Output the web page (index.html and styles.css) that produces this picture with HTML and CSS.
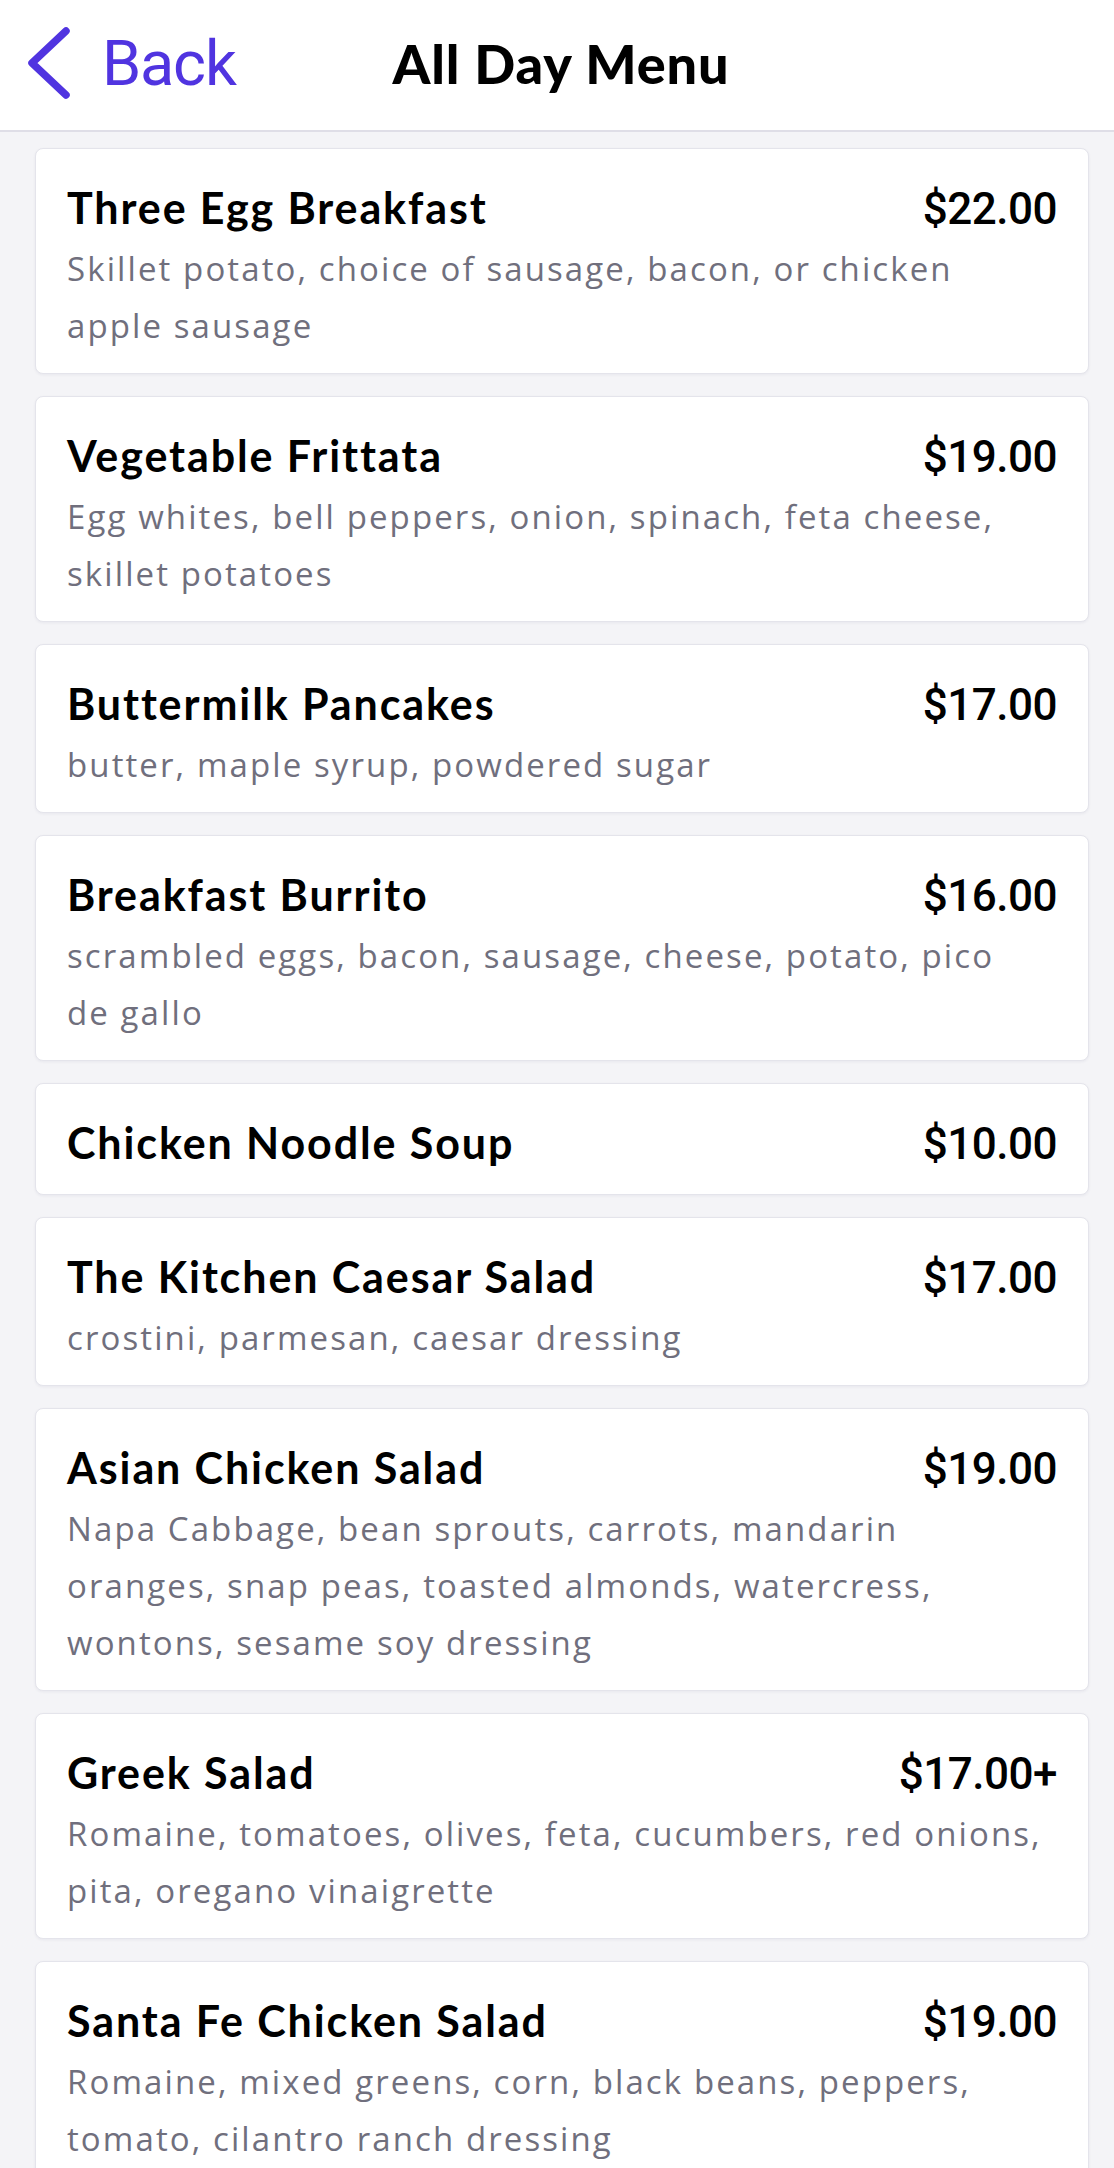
FILE: index.html
```html
<!DOCTYPE html>
<html lang="en">
<head>
  <meta charset="UTF-8" />
  <meta name="viewport" content="width=device-width, initial-scale=1" />
  <title>All Day Menu</title>
  <link rel="stylesheet" href="styles.css">
</head>
<body>

<header class="topbar">
  <a class="back" href="#">
    <svg class="back-icon" viewBox="0 0 46 74" width="46" height="74" aria-hidden="true">
      <path d="M40 5 L6 37 L40 69" fill="none" stroke="currentColor" stroke-width="7.5" stroke-linecap="round" stroke-linejoin="round"/>
    </svg>
    <span>Back</span>
  </a>
  <h1 class="topbar-title">All Day Menu</h1>
  <span></span>
</header>

<main class="menu">
  <div class="item">
    <div class="item-head"><h2 class="item-name">Three Egg Breakfast</h2><span class="item-price">$22.00</span></div>
    <p class="item-desc">Skillet potato, choice of sausage, bacon, or chicken apple sausage</p>
  </div>
  <div class="item">
    <div class="item-head"><h2 class="item-name">Vegetable Frittata</h2><span class="item-price">$19.00</span></div>
    <p class="item-desc">Egg whites, bell peppers, onion, spinach, feta cheese, skillet potatoes</p>
  </div>
  <div class="item">
    <div class="item-head"><h2 class="item-name">Buttermilk Pancakes</h2><span class="item-price">$17.00</span></div>
    <p class="item-desc">butter, maple syrup, powdered sugar</p>
  </div>
  <div class="item">
    <div class="item-head"><h2 class="item-name">Breakfast Burrito</h2><span class="item-price">$16.00</span></div>
    <p class="item-desc">scrambled eggs, bacon, sausage, cheese, potato, pico de gallo</p>
  </div>
  <div class="item">
    <div class="item-head"><h2 class="item-name">Chicken Noodle Soup</h2><span class="item-price">$10.00</span></div>
  </div>
  <div class="item">
    <div class="item-head"><h2 class="item-name">The Kitchen Caesar Salad</h2><span class="item-price">$17.00</span></div>
    <p class="item-desc">crostini, parmesan, caesar dressing</p>
  </div>
  <div class="item">
    <div class="item-head"><h2 class="item-name">Asian Chicken Salad</h2><span class="item-price">$19.00</span></div>
    <p class="item-desc">Napa Cabbage, bean sprouts, carrots, mandarin oranges, snap peas, toasted almonds, watercress, wontons, sesame soy dressing</p>
  </div>
  <div class="item">
    <div class="item-head"><h2 class="item-name">Greek Salad</h2><span class="item-price">$17.00+</span></div>
    <p class="item-desc">Romaine, tomatoes, olives, feta, cucumbers, red onions, pita, oregano vinaigrette</p>
  </div>
  <div class="item">
    <div class="item-head"><h2 class="item-name">Santa Fe Chicken Salad</h2><span class="item-price">$19.00</span></div>
    <p class="item-desc">Romaine, mixed greens, corn, black beans, peppers, tomato, cilantro ranch dressing</p>
  </div>
</main>

</body>
</html>
```

FILE: styles.css
```css
body {
  font-family: 'Lato', 'Liberation Sans', sans-serif;
  background-color: #f4f4f7;
  color: #000;
  margin: 0;
  padding: 0;
}
.topbar {
  display: grid;
  grid-template-columns: 1fr auto 1fr;
  align-items: center;
  height: 130px;
  background: #fff;
  border-bottom: 2px solid #dfdee7;
  box-sizing: content-box;
}
.back {
  display: flex;
  align-items: center;
  gap: 30px;
  padding-left: 26px;
  color: #5034e0;
  text-decoration: none;
  font-family: 'Roboto', 'Liberation Sans', sans-serif;
  font-size: 63px;
  letter-spacing: -1.2px;
  margin-top: -4px;
}
.back-icon {
  display: block;
}
.topbar-title {
  margin: -4px 0 0 8px;
  font-size: 54px;
  font-weight: 900;
  letter-spacing: 0.9px;
}
.menu {
  display: flex;
  flex-direction: column;
  gap: 22px;
  padding: 16px 25px 0 35px;
}
.item {
  background: #fff;
  border: 1px solid #e4e4eb;
  border-radius: 8px;
  box-shadow: 0 1px 3px rgba(40,40,80,0.06);
  padding: 26px 31px 19px;
}
.item-head {
  display: flex;
  justify-content: space-between;
  align-items: baseline;
}
.item-name {
  margin: 0;
  font-size: 43px;
  font-weight: 700;
  line-height: 65px;
  letter-spacing: 1.9px;
}
.item-price {
  font-family: 'Roboto', 'Liberation Sans', sans-serif;
  font-size: 44px;
  font-weight: 500;
  letter-spacing: -0.5px;
}
.item-desc {
  margin: 0;
  padding-right: 10px;
  color: #706f7d;
  font-family: 'Open Sans', 'Liberation Sans', sans-serif;
  font-size: 33px;
  line-height: 57px;
  letter-spacing: 2.1px;
}
```
